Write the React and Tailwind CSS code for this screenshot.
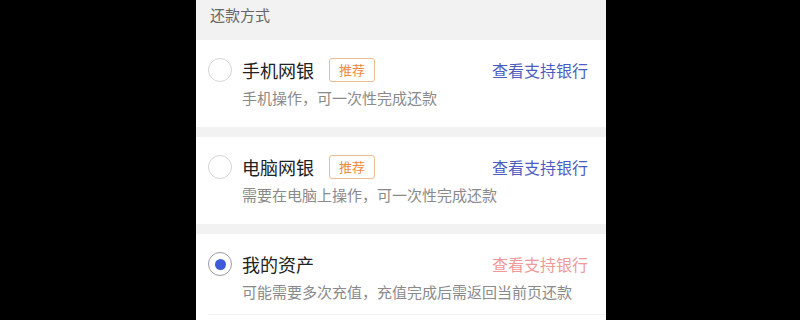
const methods = [
    { title: "手机网银", tag: "推荐", desc: "手机操作，可一次性完成还款", selected: false },
    { title: "电脑网银", tag: "推荐", desc: "需要在电脑上操作，可一次性完成还款", selected: false },
    { title: "我的资产", tag: null, desc: "可能需要多次充值，充值完成后需返回当前页还款", selected: true },
]

function Radio({ checked }) {
    return (
        <div
            className={`w-[24px] h-[24px] rounded-full border-[1.5px] flex items-center justify-center shrink-0 ${
                checked ? "border-[#9a9aa6]" : "border-[#d4d4d4]"
            }`}
        >
            {checked && <div className="w-[11px] h-[11px] rounded-full bg-[#3f5bd8]" />}
        </div>
    )
}

export default function App() {
    return (
        <div
            className="w-[800px] h-[320px] bg-black overflow-hidden pl-[196px]"
            style={{ fontFamily: '"Noto Sans CJK SC", "Noto Sans", sans-serif' }}
        >
            <div className="w-[410px] h-full bg-[#f2f2f2] flex flex-col">
                {/* 标题 */}
                <div className="h-[40px] shrink-0 pt-[5px] pl-[14px] text-[15px] leading-[20px] text-[#666]">
                    还款方式
                </div>

                {methods.map((m, i) => (
                    <div
                        key={m.title}
                        className={`bg-white pt-[18px] shrink-0 ${i > 0 ? "mt-[10px]" : ""} ${
                            i === methods.length - 1 ? "pb-0" : "pb-[19px]"
                        }`}
                    >
                        <div className="flex items-center h-[24px] pl-[12px] pr-[18px]">
                            <Radio checked={m.selected} />
                            <span className="ml-[10px] text-[18px] leading-[24px] text-[#222]">{m.title}</span>
                            {m.tag && (
                                <span className="ml-[15px] w-[46px] h-[24px] border border-[#e8bd92] rounded-[3px] text-[13px] text-[#ee8a3c] flex items-center justify-center">
                                    {m.tag}
                                </span>
                            )}
                            <span
                                className={`ml-auto text-[16px] ${
                                    m.selected ? "text-[#ef9a98]" : "text-[#4d5dbf]"
                                }`}
                            >
                                查看支持银行
                            </span>
                        </div>
                        <div className="ml-[46px] mt-[6px] text-[15px] leading-[20px] text-[#8a8a8a]">
                            {m.desc}
                        </div>
                        {i === methods.length - 1 && (
                            <div className="ml-[12px] mt-[12px] border-t border-[#f4f4f4]" />
                        )}
                    </div>
                ))}
                <div className="flex-1 bg-white" />
            </div>
        </div>
    )
}
